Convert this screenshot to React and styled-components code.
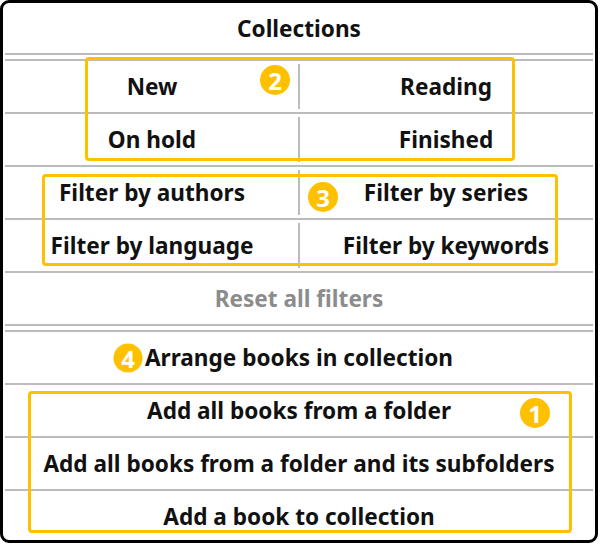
import React from 'react'
import styled, { createGlobalStyle } from 'styled-components'

const Global = createGlobalStyle`
  html, body {
    margin: 0;
    padding: 0;
    background: #fff;
  }
  body {
    font-family: "Noto Sans", "Open Sans", sans-serif;
  }
`

const Card = styled('div')`
  position: relative;
  box-sizing: border-box;
  width: 598px;
  height: 543px;
  border: 3px solid #000;
  border-radius: 9px;
  background: #fff;
  padding: 0 2px;
  display: flex;
  flex-direction: column;
  overflow: hidden;
`

const Row = styled('div')`
  flex: none;
  height: ${p => p.h || 51}px;
  display: flex;
  align-items: center;
  justify-content: center;
  font-size: 22.6px;
  font-weight: 700;
  white-space: nowrap;
  color: ${p => (p.muted ? '#8c8c8c' : '#111')};
  border-bottom: ${p => (p.last ? 'none' : '2px solid #bcbcbc')};
`

const DoubleLine = styled('div')`
  flex: none;
  height: 4px;
  border-bottom: 2px solid #bcbcbc;
`

const SplitRow = styled('div')`
  flex: none;
  height: 51px;
  display: grid;
  grid-template-columns: 1fr 1fr;
  border-bottom: 2px solid #bcbcbc;
`

const Cell = styled('div')`
  position: relative;
  display: flex;
  align-items: center;
  justify-content: center;
  font-size: 22.6px;
  font-weight: 700;
  white-space: nowrap;
  color: #111;

  ${p => p.right && `
    &::before {
      content: '';
      position: absolute;
      left: -1px;
      top: 3px;
      bottom: 3px;
      width: 2px;
      background: #bcbcbc;
    }
  `}
`

const Frame = styled('div')`
  position: absolute;
  box-sizing: border-box;
  border: 3px solid #ffc000;
  border-radius: 4px;
  pointer-events: none;
`

const Badge = styled('div')`
  position: absolute;
  width: ${p => p.size || 30}px;
  height: ${p => p.size || 30}px;
  transform: translate(-50%, -50%);
  border-radius: 50%;
  background: #ffc000;
  color: #fff;
  font-size: 24px;
  font-weight: 700;
  display: flex;
  align-items: center;
  justify-content: center;
`

// page coords minus the 3px card border
const at = (x, y, w, h) => ({ left: x - 3, top: y - 3, width: w, height: h })

const App = () => {
  return (
    <>
      <Global />
      <Card>
        <Row h={50}>Collections</Row>
        <DoubleLine />
        <SplitRow>
          <Cell>New</Cell>
          <Cell right>Reading</Cell>
        </SplitRow>
        <SplitRow>
          <Cell>On hold</Cell>
          <Cell right>Finished</Cell>
        </SplitRow>
        <SplitRow>
          <Cell>Filter by authors</Cell>
          <Cell right>Filter by series</Cell>
        </SplitRow>
        <SplitRow>
          <Cell>Filter by language</Cell>
          <Cell right>Filter by keywords</Cell>
        </SplitRow>
        <Row muted>Reset all filters</Row>
        <DoubleLine />
        <Row>Arrange books in collection</Row>
        <Row>Add all books from a folder</Row>
        <Row>Add all books from a folder and its subfolders</Row>
        <Row last>Add a book to collection</Row>

        <Frame style={at(85, 57, 430, 104)} />
        <Frame style={at(42, 174, 516, 92)} />
        <Frame style={at(28, 391, 544, 142)} />
        <Badge style={{ left: 272, top: 77 }}>2</Badge>
        <Badge style={{ left: 320, top: 194 }}>3</Badge>
        <Badge size={29} style={{ left: 125, top: 355 }}>4</Badge>
        <Badge style={{ left: 532, top: 410 }}>1</Badge>
      </Card>
    </>
  )
}

export default App
